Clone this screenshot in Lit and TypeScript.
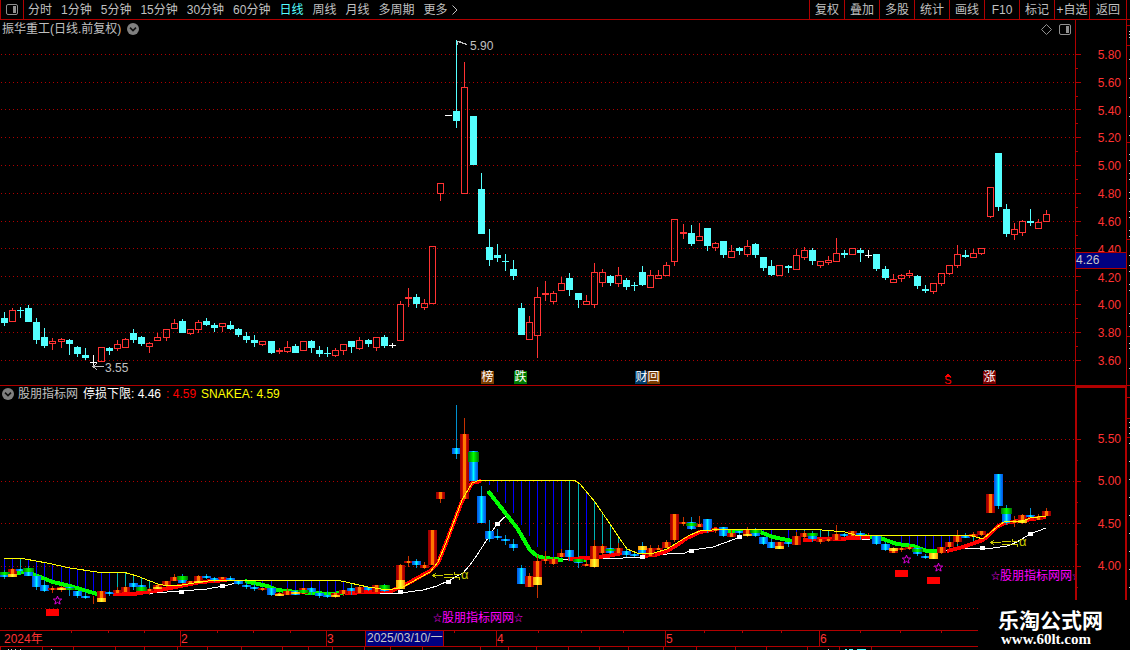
import { LitElement, html, svg, css } from "lit";
import { customElement } from "lit/decorators.js";

type Kind = "r" | "c" | "w";
type Candle = { x: number; kind: Kind; high: number; top: number; bottom: number; low: number };
type Point = [number, number];

// kind, high, body top, body bottom, low
const SERIES = `c 312 318 323 326|r 308 310 322 322|c 307 310 311 318|c 305 308 322 322|c 318 322 340 344|c 328 337 346 348|r 338 341 344 350|r 338 339 342 348|c 339 340 344 355|c 346 347 354 357|c 348 355 358 360|w 355 362 363 367
r 347 347 362 362|c 347 348 351 355|r 340 344 349 351|r 338 339 348 348|c 329 333 340 343|c 336 337 344 346|r 342 343 347 353|r 333 337 341 341|r 329 329 338 341|r 319 323 329 329|c 319 321 333 333|r 329 329 334 335|r 320 322 330 333|c 318 321 325 326
c 323 325 328 332|r 323 323 327 332|c 321 325 329 330|c 328 329 335 337|c 332 336 340 343|c 335 340 343 347|r 341 341 345 346|c 341 341 353 354|r 348 350 352 354|r 341 347 352 353|c 344 346 353 353|r 341 341 351 351|c 340 341 348 353|c 346 350 354 357
c 347 353 354 357|r 348 350 356 357|r 344 344 351 355|c 341 341 347 353|r 337 340 349 350|c 339 340 344 347|r 337 337 348 351|c 335 337 346 348|w 343 345 346 348|r 301 304 341 341|r 288 297 299 307|c 294 297 304 308|r 299 303 308 310|r 246 246 304 304
r 183 183 194 201|w 115 115 116 116|c 40 111 121 128|r 62 87 194 194|c 116 116 165 165|c 173 189 234 234|c 229 247 260 266|c 244 255 258 262|c 254 261 262 271|c 260 269 276 280|c 303 308 335 335|r 316 322 340 340|r 287 297 336 358
r 281 293 295 301|r 291 293 302 304|r 277 283 291 291|c 273 278 290 296|c 293 293 300 308|r 295 301 305 305|r 263 272 305 308|r 269 272 283 287|c 275 276 283 286|r 267 275 284 287|c 278 280 287 290|c 282 285 286 291|c 266 272 285 286
r 270 275 288 288|r 270 275 279 279|r 262 265 276 276|r 219 219 262 266|r 224 232 234 239|c 225 233 244 246|r 223 236 241 241|c 228 228 246 251|r 242 243 248 251|c 241 241 255 258|r 245 251 258 258|c 247 248 251 255|r 240 246 255 257
c 243 244 255 258|c 257 257 268 271|c 260 266 275 276|r 265 265 276 276|c 265 266 268 273|r 249 255 270 270|r 247 250 258 260|c 248 250 261 265|r 261 261 266 268|r 256 260 263 265|r 238 253 262 262|c 250 253 255 258|r 248 248 255 255
c 248 250 253 262|w 250 255 256 258|c 254 254 269 271|c 266 269 278 280|r 274 279 283 283|r 274 275 279 282|r 270 273 276 278|c 275 276 286 289|c 285 289 291 293|r 283 283 292 294|r 273 273 284 286|r 265 265 274 275|r 245 254 266 268|c 250 255 257 258
r 249 253 258 258|r 248 248 254 255|r 187 187 217 218|c 153 153 207 211|c 204 209 234 237|r 223 229 235 240|r 220 221 233 236|c 209 221 223 226|r 219 222 229 229|r 210 214 222 222`;

const X0 = 4;
const STEP = 8.078;
const candles: Candle[] = SERIES.split(/[|\n]/).map((row, i) => {
  const [kind, high, top, bottom, low] = row.trim().split(" ");
  return { x: Math.round(X0 + STEP * i), kind: kind as Kind, high: +high, top: +top, bottom: +bottom, low: +low };
});
const toLower = (y: number) => Math.round(481.3 + (y - 165.5) * 0.607);

const UPPER_LEVELS = [54, 82, 109, 137, 165, 193, 221, 248, 276, 304, 332, 360];
const UPPER_LABELS = ["5.80", "5.60", "5.40", "5.20", "5.00", "4.80", "4.60", "4.40", "4.20", "4.00", "3.80", "3.60"];
const LOWER_LEVELS = [439, 481, 523, 566, 608];
const LOWER_LABELS = ["5.50", "5.00", "4.50", "4.00"];

const YELLOW: Point[][] = [
  [[4, 558], [25, 559], [47, 563], [70, 568], [97, 572], [123, 572], [137, 576], [150, 581], [158, 584], [168, 586], [182, 585], [200, 582], [217, 580], [337, 580], [350, 583], [368, 587], [388, 590], [403, 587], [430, 572], [438, 562], [446, 543], [462, 500], [472, 483], [480, 480], [574, 480], [580, 484], [595, 502], [610, 524], [620, 539], [627, 549], [637, 553], [654, 553], [667, 549], [680, 541], [690, 535], [700, 531], [712, 530], [728, 529], [815, 529], [822, 530], [845, 532], [855, 535], [969, 535], [983, 539], [990, 533], [997, 527], [1004, 522], [1023, 521], [1030, 518], [1046, 516]],
];
const RED: Point[][] = [
  [[113, 594], [133, 594], [160, 590], [180, 586], [200, 582], [227, 580]],
  [[345, 593], [370, 592], [391, 591], [405, 585], [430, 571], [438, 563], [446, 543], [462, 501], [472, 483], [481, 481]],
  [[568, 559], [590, 558], [607, 556], [623, 553]],
  [[642, 556], [655, 555], [667, 551], [677, 545], [687, 538], [700, 532], [717, 529]],
  [[803, 540], [823, 539], [838, 539], [870, 537]],
  [[947, 551], [963, 547], [983, 540], [990, 534], [997, 527], [1004, 523], [1025, 520], [1046, 517]],
];
const GREEN: Point[][] = [
  [[4, 574], [27, 572], [40, 577], [53, 582], [70, 586], [97, 594]],
  [[245, 581], [267, 586], [277, 590], [297, 592], [330, 594], [343, 593]],
  [[488, 491], [503, 510], [517, 528], [530, 550], [537, 556], [545, 558], [563, 560]],
  [[577, 560], [587, 560]],
  [[728, 531], [743, 531], [760, 532], [773, 537], [792, 541]],
  [[863, 536], [880, 538], [897, 544], [913, 546], [927, 551], [937, 551]],
];
const WHITE: Point[][] = [
  [[113, 594], [133, 593], [153, 593], [182, 591], [207, 589], [223, 586], [237, 583]],
  [[348, 594], [370, 593], [400, 593], [423, 590], [437, 586], [448, 581], [463, 573], [470, 565], [477, 555], [497, 524], [507, 515]],
  [[563, 560], [598, 559], [623, 558], [643, 557], [667, 554], [685, 553], [692, 550], [713, 547], [727, 542], [740, 537]],
  [[853, 539], [870, 539]],
  [[945, 551], [963, 548], [993, 548], [1007, 546], [1017, 542], [1030, 534], [1046, 528]],
];
const KNOTS: Point[] = [[181, 592], [222, 586], [400, 592], [448, 582], [497, 524], [642, 557], [691, 551], [739, 537], [982, 548], [1030, 534]];

// candle index, foot of the stem
const BLUE_STEMS: Point[] = [[0, 575], [1, 570], [3, 569], [4, 577], [5, 580], [6, 583], [7, 584], [8, 587], [9, 590], [10, 590], [11, 593], [12, 592], [13, 594], [31, 587], [32, 588], [33, 590], [35, 592], [36, 592], [37, 592], [38, 592], [39, 594], [40, 594], [41, 594], [42, 590], [60, 485], [61, 492], [62, 503], [63, 513], [64, 525], [65, 536], [66, 547], [67, 555], [68, 557], [69, 559], [72, 562], [94, 534], [95, 537], [97, 540], [98, 545], [111, 545], [112, 546], [113, 548], [114, 550], [115, 551], [116, 551], [117, 550]];
const TEAL_STEMS: Point[] = [[2, 570], [14, 592], [15, 592], [16, 590], [17, 589], [18, 588], [43, 592], [44, 589], [70, 558], [71, 560], [73, 560], [74, 556], [75, 557], [76, 555], [77, 553], [99, 540], [101, 539], [102, 540], [118, 547], [120, 544], [121, 541]];

// candle index, top, bottom of the coloured part of a body
const GREEN_CAPS: [number, number, number][] = [[0, 572, 575], [3, 568, 572], [8, 588, 590], [17, 587, 591], [22, 576, 580], [37, 590, 593], [47, 585, 589], [58, 452, 462], [71, 559, 562], [75, 549, 551], [85, 523, 526], [93, 529, 533], [100, 533, 536], [113, 549, 552], [124, 508, 514]];
const YELLOW_PARTS: [number, number, number][] = [[1, 574, 577], [7, 588, 590], [12, 598, 602], [19, 587, 589], [24, 581, 583], [34, 594, 596], [36, 592, 594], [41, 595, 597], [49, 580, 589], [66, 577, 585], [73, 559, 567], [79, 546, 550], [92, 534, 536], [96, 546, 549], [110, 548, 551], [115, 553, 559], [126, 520, 523]];

const BADGES = [
  { x: 481, text: "榜", tone: "brown" },
  { x: 514, text: "跌", tone: "green" },
  { x: 635, text: "财", tone: "navy" },
  { x: 647, text: "回", tone: "brown" },
  { x: 983, text: "涨", tone: "maroon" },
];
const STARS: Point[] = [[57, 600], [906, 559], [938, 567]];
const BLOCKS: Point[] = [[46, 609], [895, 570], [927, 577]];

const points = (line: Point[]) => line.map(([x, y]) => `${x},${y}`).join(" ");
const starPath = (cx: number, cy: number) => {
  const out: string[] = [];
  for (let k = 0; k < 10; k++) {
    const r = k % 2 ? 1.9 : 4.4;
    const a = -Math.PI / 2 + (k * Math.PI) / 5;
    out.push(`${(cx + r * Math.cos(a)).toFixed(1)},${(cy + r * Math.sin(a)).toFixed(1)}`);
  }
  return out.join(" ");
};
const left = (x: number) => `${(x / 1075) * 100}%`;
const upperTop = (y: number) => `${((y - 20) / 365) * 100}%`;
const lowerTop = (y: number) => `${((y - 386) / 244) * 100}%`;

const font = css`"Liberation Sans", "Noto Sans CJK SC", sans-serif`;

const chevronDisc = html`<svg class="disc" viewBox="0 0 12 12" width="12" height="12" aria-hidden="true">
  <circle cx="6" cy="6" r="6" fill="#808080"></circle>
  <path d="M3 4.6L6 7.6L9 4.6" fill="none" stroke="#101010" stroke-width="1.6"></path>
</svg>`;
const panelIcon = html`<svg viewBox="0 0 12 11" width="12" height="11" aria-hidden="true">
  <rect x=".5" y=".5" width="11" height="10" rx="1.5" fill="none" stroke="#909090"></rect>
  <rect x="7" y="2" width="3" height="7" fill="#909090"></rect>
</svg>`;

@customElement("period-toolbar")
class PeriodToolbar extends LitElement {
  static styles = css`
    :host { display: flex; height: 19px; border-bottom: 1px solid #b00000; padding-right: 3px; font: 12px/18px ${font}; }
    button { font: inherit; color: #c0c0c0; background: none; border: 0; padding: 0; margin: 0; white-space: nowrap; cursor: pointer; }
    .panel { box-sizing: border-box; width: 24px; border: solid #b00000; border-width: 0 1px; display: flex; align-items: center; justify-content: center; padding-right: 1px; }
    .periods { display: flex; gap: 9px; flex: 1; padding-left: 4px; }
    .on { color: #54ffff; }
    .more { display: flex; align-items: center; gap: 4px; }
    .actions { display: flex; }
    .actions button { box-sizing: border-box; width: 35px; border-left: 1px solid #b00000; text-align: center; }
    .actions button:last-child { width: 38px; border-right: 1px solid #b00000; }
  `;
  periods = ["分时", "1分钟", "5分钟", "15分钟", "30分钟", "60分钟", "日线", "周线", "月线", "多周期"];
  actions = ["复权", "叠加", "多股", "统计", "画线", "F10", "标记", "+自选", "返回"];
  render() {
    return html`
      <button class="panel" aria-label="侧栏">${panelIcon}</button>
      <nav class="periods">
        ${this.periods.map((p) => html`<button class=${p === "日线" ? "on" : ""}>${p}</button>`)}
        <button class="more">更多<svg width="6" height="10" viewBox="0 0 6 10" aria-hidden="true"><path d="M.5 .5L5 5L.5 9.5" fill="none" stroke="#c0c0c0"></path></svg></button>
      </nav>
      <div class="actions">${this.actions.map((a) => html`<button>${a}</button>`)}</div>`;
  }
}

const panelStyles = css`
  :host { display: grid; grid-template-columns: minmax(0, 1fr) 52px 3px; min-height: 0; font: 12px/14px ${font}; }
  .plot { position: relative; overflow: hidden; min-height: 0; }
  .canvas { position: absolute; inset: 0; width: 100%; height: 100%; display: block; }
  .title { position: relative; display: flex; align-items: center; color: #c0c0c0; white-space: nowrap; }
  .axis { position: relative; min-height: 0; box-sizing: border-box; }
  .ticks { position: absolute; inset: 0; width: 100%; height: 100%; }
  .labels { box-sizing: border-box; height: 100%; display: flex; flex-direction: column; align-items: flex-end; color: #ff3232; }
  .labels span { flex: 1; display: flex; align-items: center; }
  .edge { width: 3px; height: 100%; display: block; }
  .note { position: absolute; white-space: nowrap; }
`;

@customElement("price-panel")
class PricePanel extends LitElement {
  static styles = [panelStyles, css`
    :host { border-bottom: 1px solid #b00000; }
    .title { gap: 6px; padding: 2px 4px 0 2px; }
    .tools { margin-left: auto; display: flex; align-items: center; gap: 7px; }
    .tools button { padding: 0; border: 0; background: none; display: flex; }
    .axis { border: solid #b00000; border-width: 0 1px; }
    .labels { padding: 21px 5px 10px 0; }
    .last { position: absolute; left: 0; right: 0; height: 15px; line-height: 14px; background: #000080; color: #c8c8c8; border: solid #b00000; border-width: 1px 0; }
    .note { color: #c0c0c0; }
    .badge { position: absolute; width: 13px; height: 13px; line-height: 13px; text-align: center; color: #fff; }
    .brown { background: #7c3c00; }
    .green { background: #007c00; }
    .navy { background: #003c6c; }
    .maroon { background: #7c0000; }
    .split { position: absolute; width: 8px; line-height: 10px; font-size: 11px; text-align: center; color: #ff0000; }
  `];
  candle(c: Candle) {
    if (c.kind === "r") {
      const h = c.bottom - c.top;
      return svg`
        ${c.high < c.top ? svg`<rect class="r" x=${c.x} y=${c.high} width="1" height=${c.top - c.high}></rect>` : ""}
        ${c.low > c.bottom ? svg`<rect class="r" x=${c.x} y=${c.bottom} width="1" height=${c.low - c.bottom}></rect>` : ""}
        ${h <= 2
          ? svg`<rect x=${c.x - 3} y=${c.top} width="7" height=${h} fill="#ff3232"></rect>`
          : svg`<rect x=${c.x - 2.5} y=${c.top + 0.5} width="6" height=${h - 1} fill="none" stroke="#ff3232"></rect>`}`;
    }
    const fill = c.kind === "c" ? "#54ffff" : "#ffffff";
    return svg`<rect x=${c.x} y=${c.high} width="1" height=${c.low - c.high} fill=${fill}></rect>
      <rect x=${c.x - 3} y=${c.top} width="7" height=${c.bottom - c.top} fill=${fill}></rect>`;
  }
  render() {
    return html`
      <div class="plot">
        <svg class="canvas" viewBox="0 20 1075 365" preserveAspectRatio="none" shape-rendering="crispEdges">
          <style>.r { fill: #ff3232; }</style>
          ${UPPER_LEVELS.map((y) => svg`<path d="M1 ${y + 0.5}H1075" stroke="#b00000" stroke-dasharray="1 3"></path>`)}
          ${candles.map((c) => this.candle(c))}
          <path d="M457.500 45V41.500H461M458 41.500L467 44.500" fill="none" stroke="#c0c0c0"></path>
          <path d="M104 366.500H93M97 363L93 366.500L97 370" fill="none" stroke="#c0c0c0"></path>
          <path d="M945 377L948 373L951 377Z" fill="#ff0000"></path>
        </svg>
        <div class="title">
          <span>振华重工(日线.前复权)</span>${chevronDisc}
          <div class="tools">
            <button aria-label="标记点"><svg width="11" height="11" viewBox="0 0 11 11"><path d="M5.500 .5L10.500 5.500L5.500 10.500L.5 5.500Z" fill="none" stroke="#909090"></path></svg></button>
            <button aria-label="侧栏">${panelIcon}</button>
          </div>
        </div>
        <span class="note" style="left:${left(470)};top:${upperTop(39)}">5.90</span>
        <span class="note" style="left:${left(105)};top:${upperTop(361)}">3.55</span>
        ${BADGES.map((b) => html`<span class="badge ${b.tone}" style="left:${left(b.x)};top:${upperTop(371)}">${b.text}</span>`)}
        <span class="split" style="left:${left(944)};top:${upperTop(375)}">S</span>
      </div>
      <div class="axis">
        <svg class="ticks" viewBox="0 20 50 365" preserveAspectRatio="none" shape-rendering="crispEdges">
          ${UPPER_LEVELS.map((y, i) => svg`<path d="M0 ${y + 0.5}H5${i < 11 ? `M0 ${y + 14.5}H2` : ""}" stroke="#b00000"></path>`)}
        </svg>
        <div class="labels">${UPPER_LABELS.map((t) => html`<span>${t}</span>`)}</div>
        <div class="last" style="top:${upperTop(252)}">4.26</div>
      </div>
      <svg class="edge" viewBox="0 20 3 365" preserveAspectRatio="none" shape-rendering="crispEdges">
        ${[25, 45, 142, 239, 336].map((y) => svg`<rect y=${y} width="3" height="1" fill="#b00000"></rect>`)}
        ${[31, 34, 37, 59, 78, 97, 116, 135, 154, 160, 173, 179, 192, 198, 211, 217, 230, 236, 255, 265, 271, 284, 290, 313, 326, 343, 348, 368].map((y) => svg`<rect x="2" y=${y} width="1" height="1" fill="#d0d0d0"></rect>`)}
      </svg>`;
  }
}

@customElement("indicator-panel")
class IndicatorPanel extends LitElement {
  static styles = [panelStyles, css`
    .title { gap: 5px; padding: 1px 0 0 2px; }
    .disc { margin-right: -1px; }
    .white { color: #ffffff; }
    .red { color: #ff0000; }
    .yellow { color: #ffff00; }
    .axis { border: solid #b00000; border-width: 2px 2px 0; }
    .labels { padding: 30px 4px 43px 0; }
    .mark { color: #ff00ff; display: flex; }
    .small { font-size: 9px; }
    .alpha { color: #c8c800; font-size: 13px; }
  `];
  candle(c: Candle, i: number) {
    if (i === 55) return "";
    const top = toLower(c.top);
    const h = Math.max(2, toLower(c.bottom) - top);
    const up = c.kind !== "c";
    const high = toLower(c.high);
    return svg`<rect x=${c.x} y=${high} width="1" height=${Math.max(1, toLower(c.low) - high)} fill=${up ? "#c83200" : "#0090d0"}></rect>
      ${c.kind === "w" ? "" : svg`<rect x=${c.x - 4} y=${top} width="9" height=${h} fill=${up ? "url(#up)" : "url(#down)"}></rect>`}`;
  }
  render() {
    const lines = (set: Point[][], color: string, width: number) =>
      set.map((l) => svg`<polyline points=${points(l)} fill="none" stroke=${color} stroke-width=${width}></polyline>`);
    const yellowAt = (x: number) => {
      const l = YELLOW[0];
      const k = Math.max(1, l.findIndex((p) => p[0] >= x));
      const [a, b] = [l[k - 1], l[k]];
      return Math.round(a[1] + ((b[1] - a[1]) * (x - a[0])) / (b[0] - a[0]));
    };
    const stems = (set: Point[], color: string) =>
      set.map(([i, y]) => {
        const x = candles[i].x;
        const y0 = yellowAt(x);
        return y > y0 ? svg`<rect x=${x} y=${y0} width="1" height=${y - y0} fill=${color}></rect>` : "";
      });
    return html`
      <div class="plot">
        <svg class="canvas" viewBox="0 386 1075 244" preserveAspectRatio="none" shape-rendering="crispEdges">
          <defs>
            <linearGradient id="up">
              <stop offset="0" stop-color="#980000"></stop><stop offset=".2" stop-color="#b00000"></stop>
              <stop offset=".35" stop-color="#e01800"></stop><stop offset=".36" stop-color="#ff7800"></stop>
              <stop offset=".64" stop-color="#ff7800"></stop><stop offset=".65" stop-color="#e01800"></stop>
              <stop offset=".8" stop-color="#b00000"></stop><stop offset="1" stop-color="#980000"></stop>
            </linearGradient>
            <linearGradient id="down">
              <stop offset="0" stop-color="#0050e0"></stop><stop offset=".3" stop-color="#0090ff"></stop>
              <stop offset=".5" stop-color="#00ffff"></stop><stop offset=".7" stop-color="#0090ff"></stop>
              <stop offset="1" stop-color="#0050e0"></stop>
            </linearGradient>
            <linearGradient id="cap">
              <stop offset="0" stop-color="#007000"></stop><stop offset=".5" stop-color="#00ff00"></stop><stop offset="1" stop-color="#007000"></stop>
            </linearGradient>
            <linearGradient id="part">
              <stop offset="0" stop-color="#ff9000"></stop><stop offset=".5" stop-color="#ffff30"></stop><stop offset="1" stop-color="#ff9000"></stop>
            </linearGradient>
          </defs>
          ${LOWER_LEVELS.map((y) => svg`<path d="M1 ${y + 0.5}H1075" stroke="#b00000" stroke-dasharray="1 3"></path>`)}
          ${stems(BLUE_STEMS, "#0000ff")}
          ${stems(TEAL_STEMS, "#00b4b4")}
          ${lines(WHITE, "#ffffff", 1)}
          ${lines(GREEN, "#00ff00", 4)}
          ${lines(RED, "#ff0000", 4)}
          ${candles.map((c, i) => this.candle(c, i))}
          ${GREEN_CAPS.map(([i, a, b]) => svg`<rect x=${candles[i].x - 5} y=${a} width="11" height=${b - a} fill="url(#cap)"></rect>`)}
          ${YELLOW_PARTS.map(([i, a, b]) => svg`<rect x=${candles[i].x - 4} y=${a} width="9" height=${b - a} fill="url(#part)"></rect>`)}
          ${lines(YELLOW, "#ffff00", 1)}
          ${KNOTS.map(([x, y]) => svg`<rect x=${x - 2} y=${y - 2} width="5" height="4" fill="#ffffff"></rect>`)}
          ${BLOCKS.map(([x, y]) => svg`<rect x=${x} y=${y} width="13" height="7" fill="#ff0000"></rect>`)}
          ${STARS.map(([x, y]) => svg`<polygon points=${starPath(x + 0.5, y + 0.5)} fill="none" stroke="#e000e0" shape-rendering="auto"></polygon>`)}
          ${[[433, 575], [991, 542]].map(([x, y]) => svg`<path d="M${x + 10} ${y + 0.5}H${x}M${x + 3} ${y - 2}L${x} ${y + 0.5}L${x + 3} ${y + 3}M${x + 11} ${y - 0.5}h9M${x + 11} ${y + 2.5}h9M${x + 21} ${y - 0.5}h6M${x + 21} ${y + 2.5}h6M${x + 21} ${y - 3}v2M${x + 26} ${y + 3}v2" fill="none" stroke="#c8c800"></path>`)}
        </svg>
        <div class="title">
          ${chevronDisc}<span>股朋指标网</span><span class="white">停损下限: 4.46</span><span class="red">: 4.59</span><span class="yellow">SNAKEA: 4.59</span>
        </div>
        ${[[461, 568], [1019, 535]].map(([x, y]) => html`<span class="note alpha" style="left:${left(x)};top:${lowerTop(y)}">α</span>`)}
        ${[[433, 611], [991, 569]].map(([x, y]) => html`<span class="note mark" style="left:${left(x)};top:${lowerTop(y)}"><span class="small">☆</span>股朋指标网网<span class="small">☆</span></span>`)}
      </div>
      <div class="axis">
        <svg class="ticks" viewBox="0 388 48 242" preserveAspectRatio="none" shape-rendering="crispEdges">
          ${LOWER_LEVELS.map((y) => svg`<path d="M0 ${y + 0.5}H4M0 ${y + 21.5}H1" stroke="#b00000"></path>`)}
        </svg>
        <div class="labels">${LOWER_LABELS.map((t) => html`<span>${t}</span>`)}</div>
      </div>
      <svg class="edge" viewBox="0 386 3 244" preserveAspectRatio="none" shape-rendering="crispEdges">
        ${[397, 418, 437].map((y) => svg`<rect y=${y} width="3" height="1" fill="#b00000"></rect>`)}
        ${[422, 427, 433, 443, 461, 479, 497, 515, 533, 551, 569, 587].map((y) => svg`<rect x="2" y=${y} width="1" height="1" fill="#d0d0d0"></rect>`)}
      </svg>`;
  }
}

@customElement("time-axis")
class TimeAxis extends LitElement {
  static styles = css`
    :host { position: relative; display: block; box-sizing: border-box; border: solid #b00000; border-width: 1px 0; font: 12px/14px ${font}; color: #ff3232; }
    .ticks { position: absolute; inset: 0; width: 100%; height: 100%; }
    .tag { position: absolute; top: 1px; white-space: nowrap; }
    .date { position: absolute; top: 0; height: 15px; line-height: 15px; box-sizing: border-box; padding: 0 1px; background: #000080; color: #c8c8c8; border: solid #b00000; border-width: 0 1px; white-space: nowrap; }
  `;
  tags: [number, string][] = [[4, "2024年"], [181, "2"], [327, "3"], [497, "4"], [666, "5"], [820, "6"]];
  render() {
    const pos = (x: number) => `${(x / 1130) * 100}%`;
    return html`
      <svg class="ticks" viewBox="0 0 1130 15" preserveAspectRatio="none" shape-rendering="crispEdges">
        ${[71, 108, 144, 217, 253, 290, 454, 538, 581, 623, 704, 742, 781, 860, 900, 941].map((x) => svg`<rect x=${x} y="0" width="1" height="2" fill="#b00000"></rect>`)}
        ${[180, 326, 496, 665, 819].map((x) => svg`<rect x=${x} y="0" width="1" height="15" fill="#b00000"></rect>`)}
      </svg>
      ${this.tags.map(([x, t]) => html`<span class="tag" style="left:${pos(x)}">${t}</span>`)}
      <span class="date" style="left:${pos(365)}">2025/03/10/一</span>`;
  }
}

@customElement("app-root")
class AppRoot extends LitElement {
  static styles = css`
    :host { position: relative; display: grid; grid-template-rows: 20px minmax(0, 366fr) minmax(0, 244fr) 17px 3px; height: 100vh; background: #000; overflow: hidden; }
    .tabs { display: block; width: 100%; height: 3px; }
    .brand { position: absolute; right: 0; bottom: 0; width: 152px; height: 50px; box-sizing: border-box; padding: 6px 0 0 20px; background: #000; color: #fff; font: bold 21px/26px "Noto Sans CJK SC", sans-serif; white-space: nowrap; }
    .site { display: block; padding-left: 3px; font: bold 15px/14px "Liberation Serif", serif; }
  `;
  render() {
    return html`
      <period-toolbar></period-toolbar>
      <price-panel></price-panel>
      <indicator-panel></indicator-panel>
      <time-axis></time-axis>
      <svg class="tabs" viewBox="0 0 1130 3" preserveAspectRatio="none" shape-rendering="crispEdges">
        ${[0, 42, 73, 115, 144, 177, 207, 241, 282, 308, 332, 364, 390, 422, 480, 508, 536, 568, 599, 628, 663, 696, 735, 766, 807, 839, 871].map((x) => svg`<rect x=${x} width="1" height="3" fill="#b00000"></rect>`)}
        ${[8, 11, 15, 20, 51].map((x) => svg`<rect x=${x} y="2" width="1" height="1" fill="#d0d0d0"></rect>`)}
        ${[828].map((x) => svg`<rect x=${x} y="2" width="1" height="1" fill="#d0d0d0"></rect>`)}
        ${[[845, 2], [849, 4], [857, 9]].map(([x, w]) => svg`<rect x=${x} y="2" width=${w} height="1" fill="#54ffff"></rect>`)}
      </svg>
      <div class="brand">乐淘公式网<span class="site">www.60lt.com</span></div>`;
  }
}
